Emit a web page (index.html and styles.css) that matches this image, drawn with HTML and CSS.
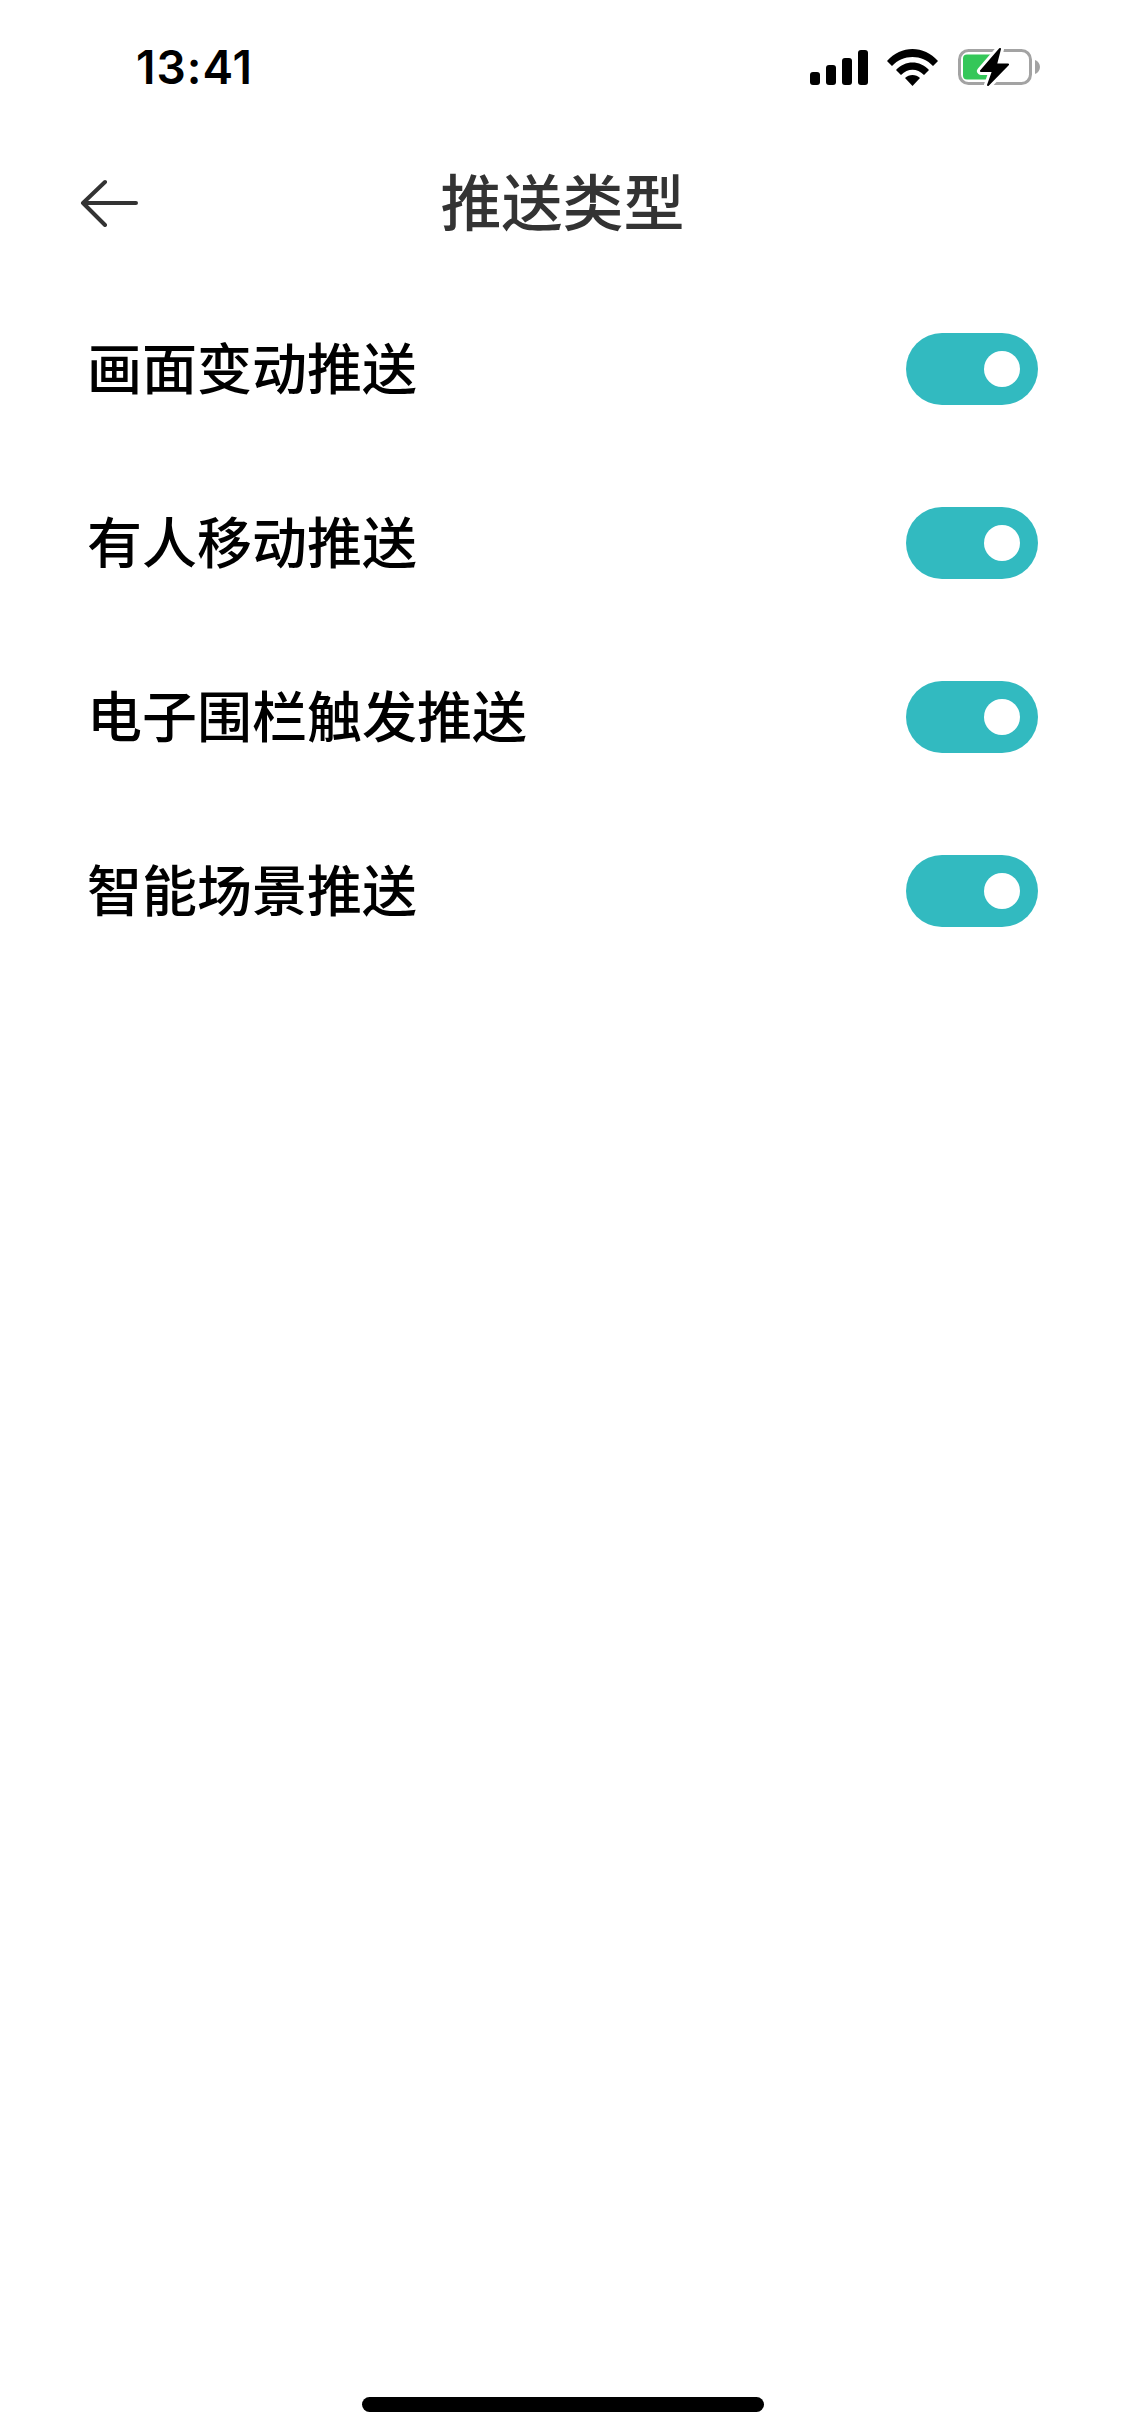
FILE: index.html
```html
<!DOCTYPE html>
<html lang="zh-CN">
    <head>
        <meta charset="UTF-8">
        <title>推送类型</title>
        <link rel="stylesheet" href="styles.css">
    </head>
    <body>
        <div class="page">
            <div class="status-bar">
                <span class="clock">13:41</span>
                <div class="status-icons">
                    <svg class="signal" width="58" height="35" viewBox="0 0 58 35">
                        <rect x="0" y="22" width="10" height="13" rx="3"/>
                        <rect x="16" y="15" width="10" height="20" rx="3"/>
                        <rect x="32" y="8" width="10" height="27" rx="3"/>
                        <rect x="48" y="0" width="10" height="35" rx="3"/>
                    </svg>
                    <svg class="wifi" width="51" height="37" viewBox="0 0 51 37">
                        <path d="M0 12 C14 -4 37 -4 51 12 L46 17 C35 5 16 5 5 17 Z"/>
                        <path d="M9 21 C18 11 33 11 42 21 L37 26 C30 19 21 19 14 26 Z"/>
                        <path d="M18 29 C22 25 29 25 33 29 L25.5 37 Z"/>
                    </svg>
                    <svg class="battery" width="82" height="38" viewBox="0 0 82 38">
                        <rect x="1.5" y="2.5" width="71" height="33" rx="9" fill="none" stroke="#a3a3a3" stroke-width="3"/>
                        <path d="M77 12 C80 13 82 16 82 19 C82 22 80 25 77 26 Z" fill="#a3a3a3"/>
                        <rect x="5" y="6.5" width="36" height="25" rx="4" fill="#34c759"/>
                        <!-- white halo under the bolt -->
                        <path d="M42 1 L23 23 L35 23 L30 37 L50 16.5 L38 16.5 Z" fill="none" stroke="#fff" stroke-width="8" stroke-linejoin="round"/>
                        <path d="M42 1 L23 23 L35 23 L30 37 L50 16.5 L38 16.5 Z" fill="#000" stroke="#000" stroke-width="2" stroke-linejoin="round"/>
                    </svg>
                </div>
            </div>

            <div class="nav-bar">
                <svg class="back" width="58" height="48" viewBox="0 0 58 48">
                    <path d="M25 3 L3 24 L25 46 M3 24 L56 24" fill="none" stroke="#333" stroke-width="4" stroke-linecap="round" stroke-linejoin="round"/>
                </svg>
                <h1 class="title">推送类型</h1>
            </div>

            <div class="list">
                <div class="row">
                    <span class="label">画面变动推送</span>
                    <span class="switch"><span class="knob"></span></span>
                </div>
                <div class="row">
                    <span class="label">有人移动推送</span>
                    <span class="switch"><span class="knob"></span></span>
                </div>
                <div class="row">
                    <span class="label">电子围栏触发推送</span>
                    <span class="switch"><span class="knob"></span></span>
                </div>
                <div class="row">
                    <span class="label">智能场景推送</span>
                    <span class="switch"><span class="knob"></span></span>
                </div>
            </div>

            <div class="home-bar"></div>
        </div>
    </body>
</html>
```

FILE: styles.css
```css
html, body {
    margin: 0;
    padding: 0;
    background-color: #fff;
}
.page {
    width: 1125px;
    height: 2436px;
    display: flex;
    flex-direction: column;
    font-family: "Noto Sans CJK SC", "Noto Sans", sans-serif;
    color: #000;
}
/* top strip with clock and battery */
.status-bar {
    height: 134px;
    display: flex;
    align-items: center;
    justify-content: space-between;
    padding: 0 85px 0 136px;
}
.clock {
    font-family: Inter, sans-serif;
    font-size: 46px;
    font-weight: 600;
    letter-spacing: 1px;
}
.status-icons {
    display: flex;
    align-items: center;
    gap: 19px;
}
.wifi {
    margin-right: 1px;
}
.nav-bar {
    height: 136px;
    display: flex;
    align-items: center;
    position: relative;
    padding-left: 80px;
}
.back {
    margin-top: 2px;
}
.title {
    position: absolute;
    left: 0;
    right: 0;
    margin: 0;
    padding-bottom: 6px;
    text-align: center;
    font-size: 61px;
    font-weight: 500;
    color: #333;
}
.list {
    margin-top: 12px;
}
.row {
    height: 174px;
    display: flex;
    align-items: center;
    justify-content: space-between;
    padding: 0 87px 0 87px;
}
.label {
    padding-bottom: 8px;
    font-size: 55px;
    font-weight: 500;
}
.switch {
    width: 132px;
    height: 72px;
    box-sizing: border-box;
    padding-right: 18px;
    border-radius: 36px;
    background-color: #32bac0;
    display: flex;
    align-items: center;
    justify-content: flex-end;
}
.knob {
    width: 36px;
    height: 36px;
    border-radius: 50%;
    background-color: #fff;
}
.home-bar {
    width: 402px;
    height: 15px;
    margin: auto auto 24px;
    border-radius: 8px;
    background-color: #000;
}
```
